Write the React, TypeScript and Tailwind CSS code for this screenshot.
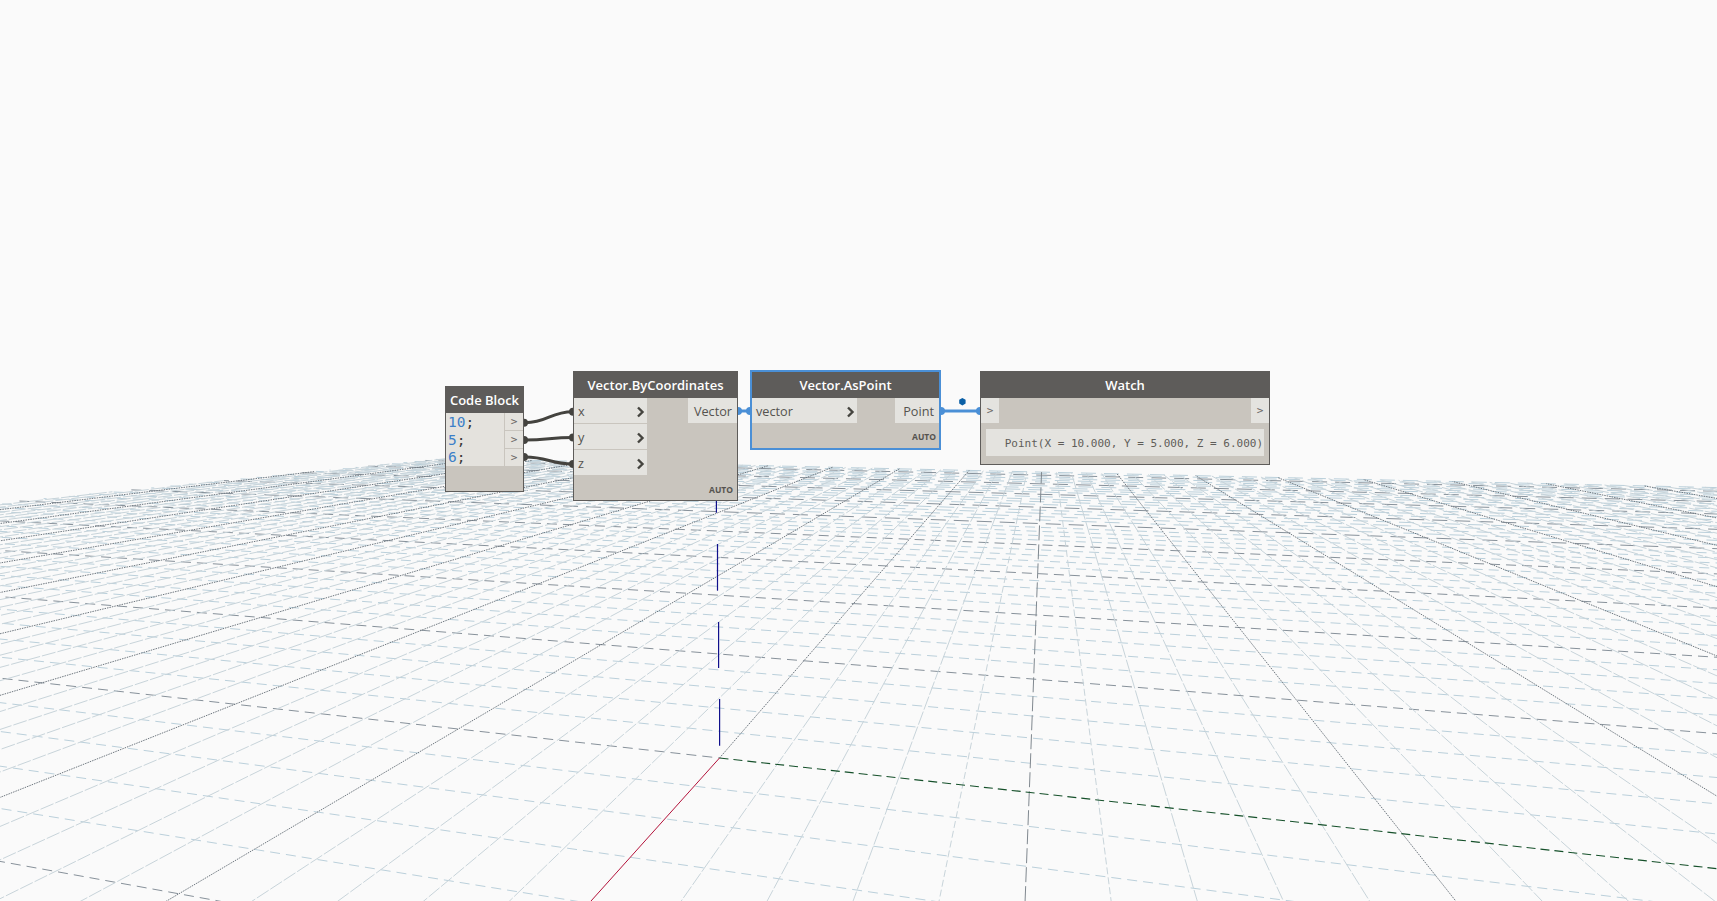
import React from "react";

const A = 0.07;
const B = -0.017;
const U = [1045, 383];
const V = [-2615, 388];
const O = [719.5, 758];
const UMAX = 47;
const VMIN = -54;
const VMAX = 49;

type Pt = [number, number];

function P(u: number, v: number): Pt {
  const a = A * u;
  const b = B * v;
  const w = 1 + a + b;
  return [(a * U[0] + b * V[0] + O[0]) / w, (a * U[1] + b * V[1] + O[1]) / w];
}

// far-left limit of the grid as seen on screen
const edge = (p: Pt) => p[1] - (503 - 0.1 * p[0]);

function clip(p: Pt, q: Pt): [Pt, Pt] | null {
  const fp = edge(p);
  const fq = edge(q);
  if (fp < 0 && fq < 0) return null;
  if (fp >= 0 && fq >= 0) return [p, q];
  const t = fp / (fp - fq);
  const m: Pt = [p[0] + (q[0] - p[0]) * t, p[1] + (q[1] - p[1]) * t];
  return fp < 0 ? [m, q] : [p, m];
}

type L = { k: string; p: Pt; q: Pt; c: string; d: string; o: number };

function buildGrid(): L[] {
  const out: L[] = [];
  for (let u = -50; u <= UMAX; u++) {
    const hi = Math.min(VMAX, (0.9 + A * u) / -B);
    if (hi <= VMIN) continue;
    const major = u % 5 === 0;
    const seg = clip(P(u, VMIN), P(u, u === 0 ? 0 : hi));
    if (!seg) continue;
    const far = u > 24;
    out.push({
      k: "u" + u,
      p: seg[0],
      q: seg[1],
      c: major ? "#87919a" : "#bbd0db",
      d: far ? "15 8" : "10 6",
      o: (u * 7 + 40) % 15,
    });
  }
  for (let v = VMIN; v <= VMAX; v++) {
    const lo = Math.max(-50, (-0.9 - B * v) / A);
    const major = v % 5 === 0;
    const seg = clip(P(v === 0 ? 0 : lo, v), P(UMAX, v));
    if (!seg) continue;
    const [p, q] = seg;
    const slope = Math.abs((q[1] - p[1]) / (q[0] - p[0] || 0.001));
    let d = major ? "1.5 1" : "14 2";
    if (slope > 4) d = major ? "15 4" : "7 3";
    out.push({ k: "v" + v, p, q, c: major ? (slope > 4 ? "#80888f" : "#6f7880") : "#c8d4da", d, o: 0 });
  }
  return out;
}

function Scene() {
  const lines = buildGrid();
  const gEnd = P(0, 49);
  const blue: [number, number, number, number][] = [
    [719.6, 745.7, 719.6, 699],
    [718.6, 668, 718.6, 622],
    [717.5, 590.7, 717.5, 544],
    [716.4, 512.7, 716.4, 495],
  ];
  return (
    <svg className="absolute inset-0" width={1717} height={901} viewBox="0 0 1717 901">
      {lines.map((l) => (
        <line
          key={l.k}
          x1={l.p[0]}
          y1={l.p[1]}
          x2={l.q[0]}
          y2={l.q[1]}
          stroke={l.c}
          strokeWidth={1}
          strokeDasharray={l.d}
          strokeDashoffset={l.o}
        />
      ))}
      <line x1={O[0]} y1={O[1]} x2={gEnd[0]} y2={gEnd[1]} stroke="#15502a" strokeWidth={1.1} strokeDasharray="9 5" />
      <line x1={O[0]} y1={O[1]} x2={591} y2={901} stroke="#b3123a" strokeWidth={1} />
      {blue.map((b, i) => (
        <line key={i} x1={b[0]} y1={b[1]} x2={b[2]} y2={b[3]} stroke="#10108c" strokeWidth={1.2} />
      ))}
    </svg>
  );
}

function Chevron() {
  return (
    <svg width="9" height="12" viewBox="0 0 9 12" className="shrink-0">
      <path d="M2 1.5 L6.5 6 L2 10.5" fill="none" stroke="#45443f" strokeWidth="2.4" />
    </svg>
  );
}

const head = "h-[26px] pt-px shrink-0 bg-[#5e5c5a] flex items-center justify-center text-white text-[13px] font-semibold whitespace-nowrap";
const sans = "font-['Open_Sans',sans-serif]";
const mono = "font-['DejaVu_Sans_Mono',monospace]";

function Input({ name, w }: { name: string; w: string }) {
  return (
    <div className={`${w} h-[25px] pt-[2px] shrink-0 bg-[#e4e3df] flex items-center justify-between pl-[4px] pr-[2px] text-[12.7px] text-[#55534f]`}>
      <span>{name}</span>
      <Chevron />
    </div>
  );
}

function Auto({ pos }: { pos: string }) {
  return (
    <div className={`absolute ${pos} text-[8.5px] leading-[10px] font-bold text-[#55534f]`}>AUTO</div>
  );
}

function Nodes() {
  return (
    <>
      {/* Code Block */}
      <div className={`${sans} absolute left-[445px] top-[386px] w-[79px] h-[106px] border border-[#5e5c5a] bg-[#c9c5be] flex flex-col`}>
        <div className={head}>Code Block</div>
        <div className="flex h-[53px]">
          <div className={`${mono} w-[58px] bg-[#e4e2dd] pl-[2px] pt-[1px] text-[14.5px] leading-[17.5px] text-[#3a3a3a]`}>
            {["10", "5", "6"].map((n) => (
              <div key={n}>
                <span className="text-[#3c7fc8]">{n}</span>;
              </div>
            ))}
          </div>
          <div className={`${mono} flex-1 flex flex-col gap-px pl-px text-[11px] text-[#6a6864]`}>
            <div className="h-[17px] pt-px bg-[#e4e2dd] flex items-center justify-center">&gt;</div>
            <div className="h-[17px] pt-px bg-[#e4e2dd] flex items-center justify-center">&gt;</div>
            <div className="h-[17px] pt-px bg-[#e4e2dd] flex items-center justify-center">&gt;</div>
          </div>
        </div>
      </div>

      {/* Vector.ByCoordinates */}
      <div className={`${sans} absolute left-[573px] top-[371px] w-[165px] h-[130px] border border-[#5e5c5a] bg-[#c9c5be] flex flex-col`}>
        <div className={head}>Vector.ByCoordinates</div>
        <div className="flex justify-between items-start">
          <div className="flex flex-col gap-px">
            <Input name="x" w="w-[73px]" />
            <Input name="y" w="w-[73px]" />
            <Input name="z" w="w-[73px]" />
          </div>
          <div className="w-[49px] h-[25px] pt-[2px] bg-[#e4e3df] flex items-center justify-end pr-[5px] text-[12.7px] text-[#55534f]">Vector</div>
        </div>
        <Auto pos="right-[4px] bottom-[5px]" />
      </div>

      {/* Vector.AsPoint */}
      <div className={`${sans} absolute left-[750px] top-[370px] w-[191px] h-[80px] border-2 border-[#4a8fd6] bg-[#c9c5be] flex flex-col`}>
        <div className={head}>Vector.AsPoint</div>
        <div className="flex justify-between items-start">
          <Input name="vector" w="w-[105px]" />
          <div className="w-[44px] h-[25px] pt-[2px] bg-[#e4e3df] flex items-center justify-end pr-[5px] text-[12.7px] text-[#55534f]">Point</div>
        </div>
        <Auto pos="right-[3px] bottom-[6px]" />
      </div>

      {/* Watch */}
      <div className={`${sans} absolute left-[980px] top-[371px] w-[290px] h-[94px] border border-[#5e5c5a] bg-[#c9c5be] flex flex-col`}>
        <div className={head}>Watch</div>
        <div className={`${mono} flex justify-between text-[11px] text-[#6a6864]`}>
          <div className="w-[18px] h-[25px] pt-px bg-[#e4e3df] flex items-center justify-center">&gt;</div>
          <div className="w-[18px] h-[25px] pt-px bg-[#e4e3df] flex items-center justify-center">&gt;</div>
        </div>
        <div className={`${mono} mt-[6px] mx-[5px] h-[27px] pt-[3px] bg-[#e4e3df] flex items-center justify-end pr-[1px] text-[11px] text-[#5f5d59] whitespace-nowrap`}>
          Point(X = 10.000, Y = 5.000, Z = 6.000)
        </div>
      </div>
    </>
  );
}

function Wires() {
  return (
    <svg className="absolute inset-0 pointer-events-none" width={1717} height={901} viewBox="0 0 1717 901">
      <g fill="none" stroke="#44433f" strokeWidth="3">
        <path d="M525 422.7 C548 422.7 550 411.7 573 411.7" />
        <path d="M525 440 C548 440 550 437.5 573 437.5" />
        <path d="M525 457 C548 457 550 464 573 464" />
      </g>
      <g fill="#44433f">
        <circle cx="524" cy="422.7" r="4" />
        <circle cx="524" cy="440" r="4" />
        <circle cx="524" cy="457" r="4" />
        <circle cx="573" cy="411.7" r="4" />
        <circle cx="573" cy="437.5" r="4" />
        <circle cx="573" cy="464" r="4" />
      </g>
      <g fill="none" stroke="#4a8fd6" strokeWidth="3">
        <path d="M738 411 L750 411" />
        <path d="M941 411 L980 411" />
      </g>
      <g fill="#4a8fd6">
        <circle cx="738" cy="411" r="4" />
        <circle cx="750" cy="411" r="4" />
        <circle cx="941" cy="411" r="4" />
        <circle cx="980" cy="411" r="4" />
      </g>
      <polygon points="962.4,398 965.6,399.8 965.6,403.6 962.4,405.4 959.2,403.6 959.2,399.8" fill="#0a5fa6" />
    </svg>
  );
}

export default function App() {
  return (
    <div className="relative w-[1717px] h-[901px] overflow-hidden bg-[#fafafa]">
      <Scene />
      <Wires />
      <Nodes />
    </div>
  );
}
